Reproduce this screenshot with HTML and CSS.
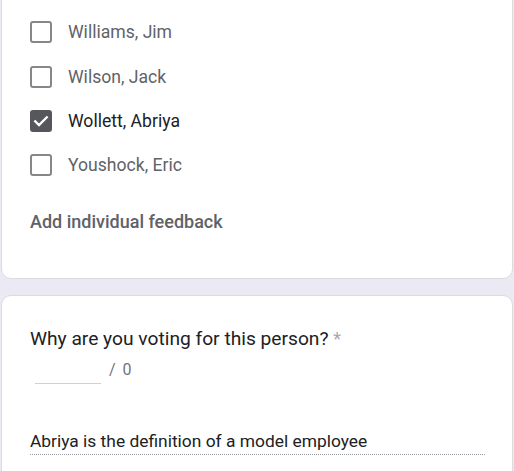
FILE: index.html
```html
<!DOCTYPE html>
<html>
<head>
<meta charset="utf-8">
<link rel="stylesheet" href="styles.css">
</head>
<body>
<div class="page">
  <section class="card card-top">
    <div class="options">
      <label class="opt"><span class="box"></span><span class="lbl">Williams, Jim</span></label>
      <label class="opt"><span class="box"></span><span class="lbl">Wilson, Jack</span></label>
      <label class="opt checked"><span class="box"><svg viewBox="0 0 22 22" width="22" height="22"><path d="M5.2 11.3l3.8 3.8 7.8-7.8" fill="none" stroke="#fff" stroke-width="2.3" stroke-linecap="square"/></svg></span><span class="lbl">Wollett, Abriya</span></label>
      <label class="opt"><span class="box"></span><span class="lbl">Youshock, Eric</span></label>
    </div>
    <div class="feedback">Add individual feedback</div>
  </section>
  <section class="card card-q">
    <div class="qtitle">Why are you voting for this person? <span class="req">*</span></div>
    <div class="score"><span class="field"></span><span class="of">/ 0</span></div>
    <div class="answer">Abriya is the definition of a model employee</div>
  </section>
</div>
</body>
</html>
```
FILE: styles.css
```css
html, body {
  margin: 0;
  padding: 0;
}
body {
  background: #eae9f4;
  font-family: Roboto, "Noto Sans", "Liberation Sans", sans-serif;
  width: 514px;
  height: 471px;
  overflow: hidden;
}
.page {
  display: flex;
  flex-direction: column;
  gap: 16px;
  padding: 0 1px;
}
.card {
  background: #fff;
  border: 1px solid #dadce0;
  border-radius: 10px;
}
.card-top {
  margin-top: -30px;
  padding: 39px 0 0 28px;
  box-sizing: border-box;
  height: 309px;
}
.options {
  display: flex;
  flex-direction: column;
}
.opt {
  display: flex;
  align-items: center;
  height: 44.4px;
  gap: 16px;
}
.box {
  width: 22px;
  height: 22px;
  box-sizing: border-box;
  border: 2px solid #86878b;
  border-radius: 3px;
  flex: none;
  display: flex;
  align-items: center;
  justify-content: center;
}
.checked .box {
  background: #56575c;
  border-color: #56575c;
}
.checked .box svg {
  flex: none;
}
.lbl {
  font-size: 17.6px;
  color: #606368;
}
.checked .lbl {
  color: #202124;
}
.feedback {
  margin-top: 23px;
  font-size: 18px;
  font-weight: 500;
  color: #606267;
}
.card-q {
  padding: 31px 0 0 28px;
  height: 200px;
}
.qtitle {
  font-size: 19.2px;
  line-height: 24px;
  color: #202124;
}
.req {
  color: #a8a9ad;
  font-size: 18px;
}
.score {
  display: flex;
  align-items: flex-start;
  margin-top: 9px;
  gap: 8px;
  height: 22px;
}
.field {
  width: 66px;
  height: 23px;
  margin-left: 5px;
  border-bottom: 1px solid #d0d1d4;
}
.of {
  font-size: 16px;
  color: #727479;
  line-height: 20px;
  letter-spacing: 1.5px;
}
.answer {
  margin-top: 48px;
  width: 455px;
  font-size: 17.4px;
  line-height: 22px;
  color: #202124;
  padding-bottom: 2px;
  border-bottom: 1px dotted #9a9ba0;
}
```
